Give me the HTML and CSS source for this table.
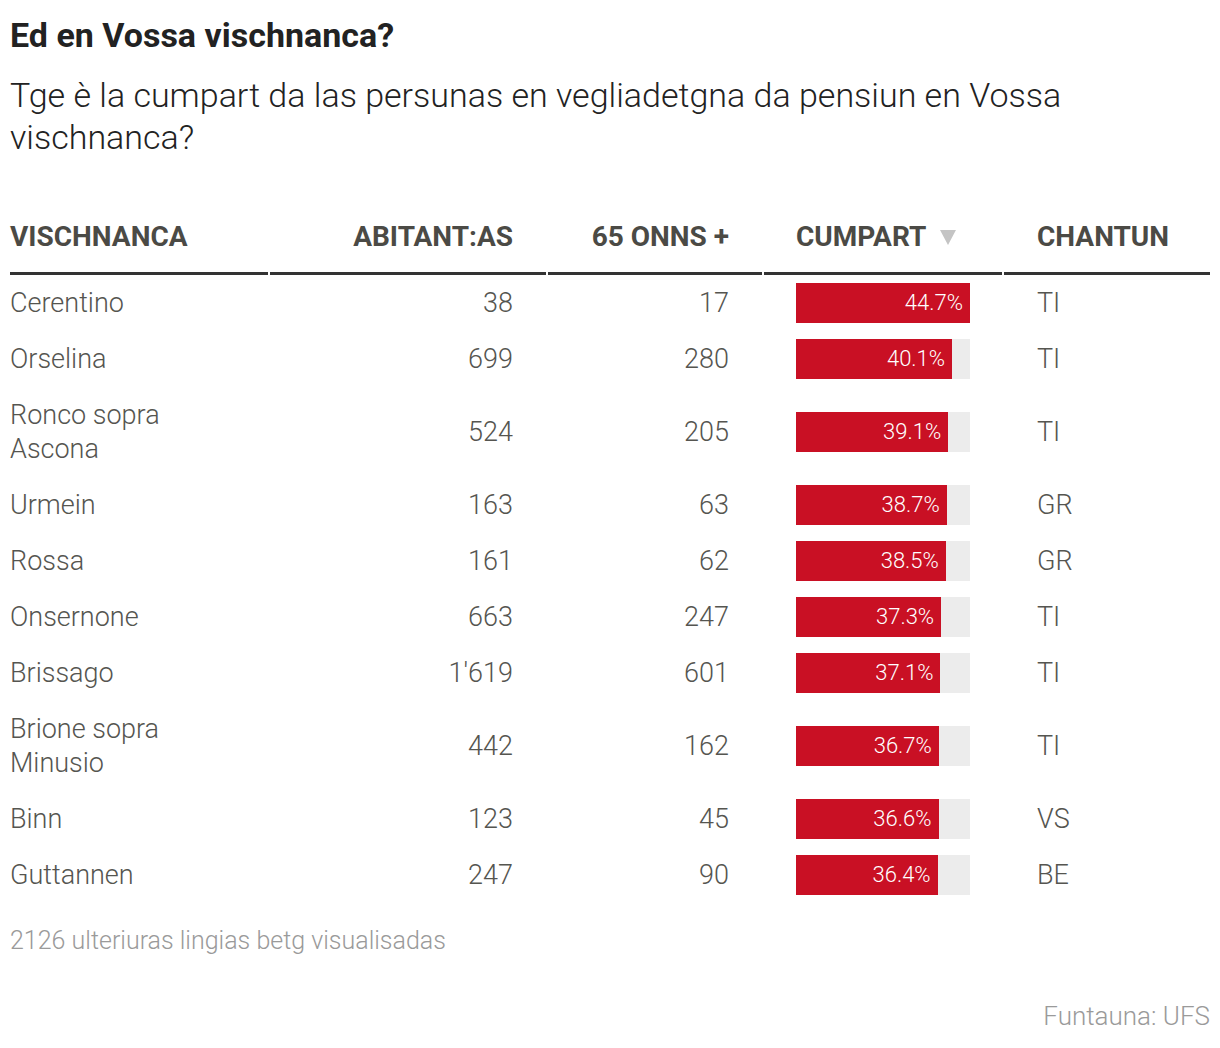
FILE: index.html
```html
<!DOCTYPE html>
<html lang="rm">
<head>
<meta charset="utf-8">
<title>Ed en Vossa vischnanca?</title>
<link rel="stylesheet" href="styles.css">
</head>
<body>
<div class="page">
  <h1 class="title">Ed en Vossa vischnanca?</h1>
  <p class="subtitle">Tge è la cumpart da las persunas en vegliadetgna da pensiun en Vossa vischnanca?</p>

  <div class="table">
    <div class="row head">
      <div class="cell left">VISCHNANCA</div>
      <div class="cell right">ABITANT:AS</div>
      <div class="cell right">65 ONNS +</div>
      <div class="cell bar-col">CUMPART <svg class="sort" width="16" height="15" viewBox="0 0 16 15"><polygon points="0,0 16,0 8,15" fill="#c4c4c4"/></svg></div>
      <div class="cell canton">CHANTUN</div>
    </div>

    <div class="row">
      <div class="cell left">Cerentino</div>
      <div class="cell right">38</div>
      <div class="cell right">17</div>
      <div class="cell bar-col"><div class="track"><div class="fill" style="width:100%">44.7%</div></div></div>
      <div class="cell canton">TI</div>
    </div>
    <div class="row">
      <div class="cell left">Orselina</div>
      <div class="cell right">699</div>
      <div class="cell right">280</div>
      <div class="cell bar-col"><div class="track"><div class="fill" style="width:89.7%">40.1%</div></div></div>
      <div class="cell canton">TI</div>
    </div>
    <div class="row">
      <div class="cell left narrow">Ronco sopra Ascona</div>
      <div class="cell right">524</div>
      <div class="cell right">205</div>
      <div class="cell bar-col"><div class="track"><div class="fill" style="width:87.5%">39.1%</div></div></div>
      <div class="cell canton">TI</div>
    </div>
    <div class="row">
      <div class="cell left">Urmein</div>
      <div class="cell right">163</div>
      <div class="cell right">63</div>
      <div class="cell bar-col"><div class="track"><div class="fill" style="width:86.6%">38.7%</div></div></div>
      <div class="cell canton">GR</div>
    </div>
    <div class="row">
      <div class="cell left">Rossa</div>
      <div class="cell right">161</div>
      <div class="cell right">62</div>
      <div class="cell bar-col"><div class="track"><div class="fill" style="width:86.1%">38.5%</div></div></div>
      <div class="cell canton">GR</div>
    </div>
    <div class="row">
      <div class="cell left">Onsernone</div>
      <div class="cell right">663</div>
      <div class="cell right">247</div>
      <div class="cell bar-col"><div class="track"><div class="fill" style="width:83.4%">37.3%</div></div></div>
      <div class="cell canton">TI</div>
    </div>
    <div class="row">
      <div class="cell left">Brissago</div>
      <div class="cell right">1'619</div>
      <div class="cell right">601</div>
      <div class="cell bar-col"><div class="track"><div class="fill" style="width:83.0%">37.1%</div></div></div>
      <div class="cell canton">TI</div>
    </div>
    <div class="row">
      <div class="cell left narrow">Brione sopra Minusio</div>
      <div class="cell right">442</div>
      <div class="cell right">162</div>
      <div class="cell bar-col"><div class="track"><div class="fill" style="width:82.1%">36.7%</div></div></div>
      <div class="cell canton">TI</div>
    </div>
    <div class="row">
      <div class="cell left">Binn</div>
      <div class="cell right">123</div>
      <div class="cell right">45</div>
      <div class="cell bar-col"><div class="track"><div class="fill" style="width:81.9%">36.6%</div></div></div>
      <div class="cell canton">VS</div>
    </div>
    <div class="row">
      <div class="cell left">Guttannen</div>
      <div class="cell right">247</div>
      <div class="cell right">90</div>
      <div class="cell bar-col"><div class="track"><div class="fill" style="width:81.4%">36.4%</div></div></div>
      <div class="cell canton">BE</div>
    </div>
  </div>

  <p class="more">2126 ulteriuras lingias betg visualisadas</p>
  <p class="source">Funtauna: UFS</p>
</div>
</body>
</html>
```

FILE: styles.css
```css
html, body {
  margin: 0;
  padding: 0;
  background: #ffffff;
}

.page {
  padding: 0 10px;
  font-family: "Roboto", "Noto Sans", sans-serif;
  color: #555550;
}

.title {
  margin: 0;
  padding-top: 15px;
  font-size: 34px;
  line-height: 40px;
  font-weight: 700;
  color: #222222;
}

.subtitle {
  margin: 0;
  padding-top: 19px;
  font-size: 34px;
  line-height: 42px;
  font-weight: 300;
  color: #222222;
}

.table {
  margin-top: 62px;
}

.row {
  display: grid;
  grid-template-columns: 258px 276px 214px 238px 206px;
  column-gap: 2px;
  align-items: center;
}

.cell {
  font-size: 27px;
  line-height: 34px;
  font-weight: 300;
  padding-top: 11px;
  padding-bottom: 11px;
}

.head .cell {
  font-weight: 700;
  color: #4b4a45;
  font-size: 28px;
  padding-top: 0;
  padding-bottom: 18px;
  border-bottom: 3px solid #333333;
  align-self: stretch;
  display: flex;
  align-items: flex-end;
}

.left { text-align: left; }
.narrow { padding-right: 90px; }

.right {
  text-align: right;
  padding-right: 33px;
}

.head .right { justify-content: flex-end; }

.bar-col {
  padding-left: 32px;
  padding-right: 32px;
}

.row .bar-col {
  padding-top: 8px;
  padding-bottom: 8px;
}

.head .bar-col {
  padding-top: 0;
  padding-bottom: 18px;
}

.sort {
  margin-left: 14px;
  margin-bottom: 9px;
}

.canton { padding-left: 33px; }

.track {
  height: 40px;
  background: #ececec;
}

.fill {
  height: 40px;
  background: #c91024;
  color: #ffffff;
  font-size: 22px;
  line-height: 40px;
  font-weight: 300;
  text-align: right;
  padding-right: 7px;
  box-sizing: border-box;
  white-space: nowrap;
}

.more {
  margin: 23px 0 0;
  font-size: 25px;
  line-height: 30px;
  font-weight: 300;
  color: #9a9a9a;
}

.source {
  margin: 44px 0 0;
  text-align: right;
  font-size: 26px;
  line-height: 32px;
  font-weight: 300;
  color: #9a9a9a;
}
```
